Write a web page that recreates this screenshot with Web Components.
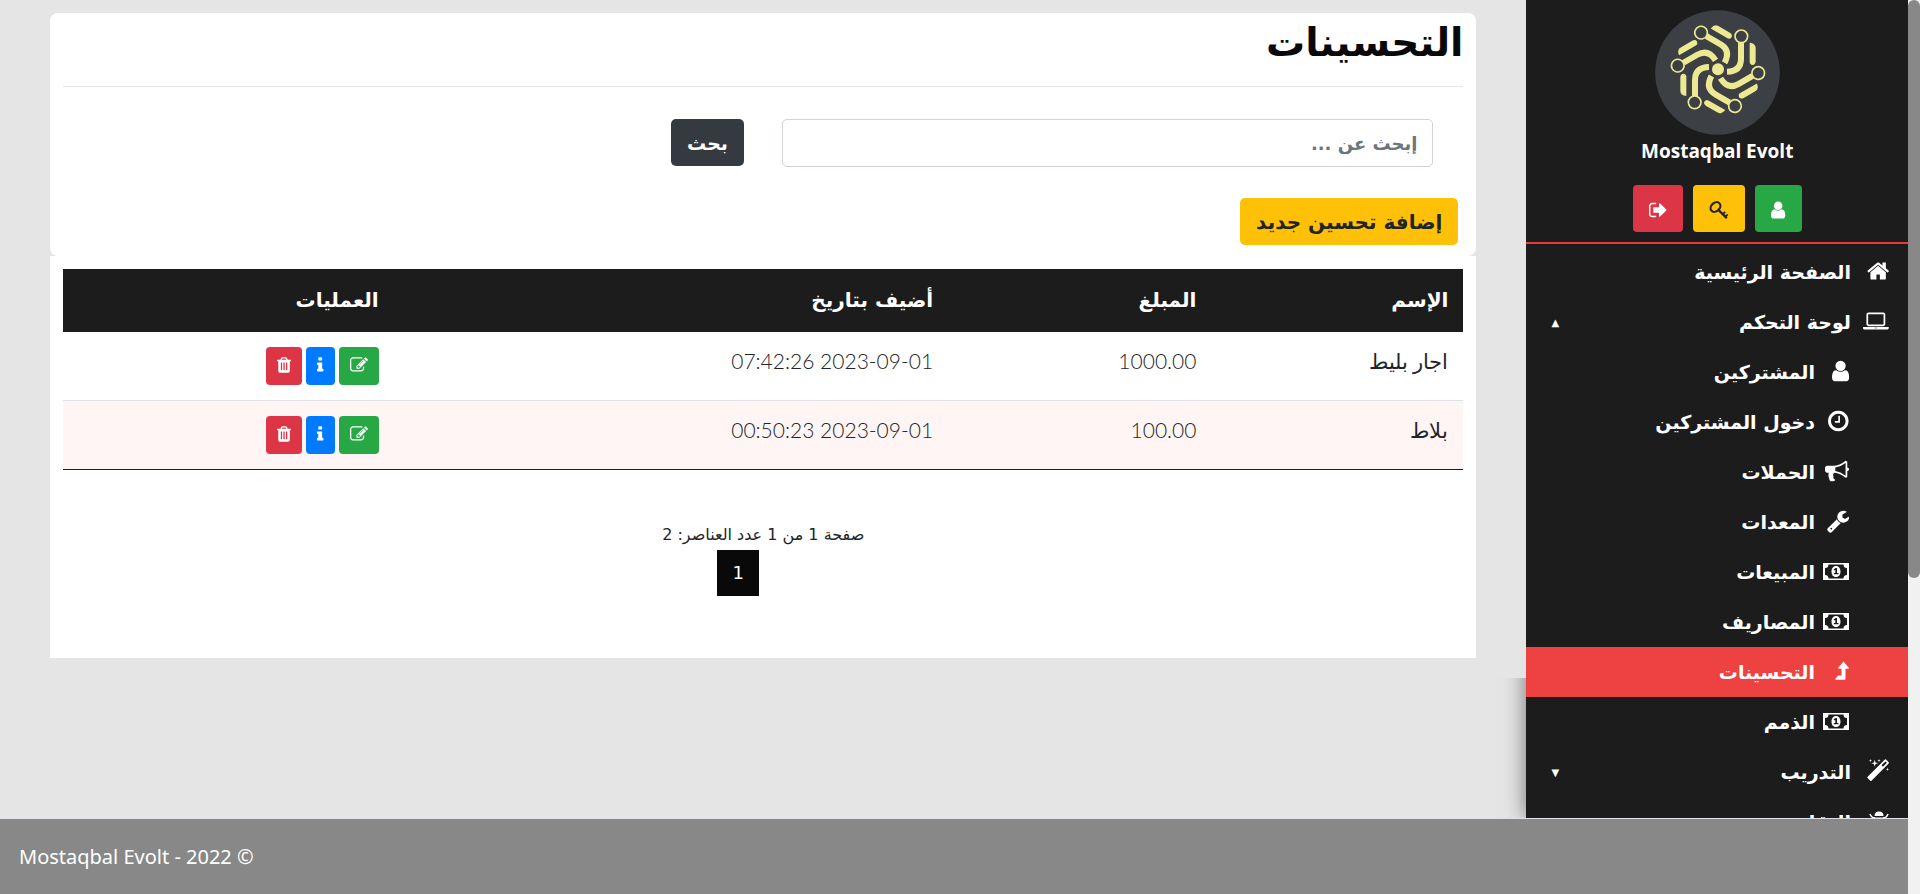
<!DOCTYPE html>
<html lang="ar" dir="rtl">
<head>
<meta charset="utf-8">
<title>التحسينات</title>
<style>
    body {
        margin: 0;
        background: #e5e5e5;
        color: #212529;
        font-family: "DejaVu Sans", sans-serif;
        font-size: 16px;
    }
</style>
</head>
<body>

<app-shell>
    <side-bar slot="side" name="Mostaqbal Evolt">
        <icon-button slot="actions" icon="user" tone="success" label="الملف الشخصي"></icon-button>
        <icon-button slot="actions" icon="key" tone="warning" label="كلمة المرور"></icon-button>
        <icon-button slot="actions" icon="sign-out" tone="danger" label="خروج"></icon-button>

        <nav-item icon="home">الصفحة الرئيسية</nav-item>
        <nav-item icon="laptop" arrow="▲">لوحة التحكم</nav-item>
        <nav-item icon="user" sub>المشتركين</nav-item>
        <nav-item icon="clock" sub>دخول المشتركين</nav-item>
        <nav-item icon="bullhorn" sub>الحملات</nav-item>
        <nav-item icon="wrench" sub>المعدات</nav-item>
        <nav-item icon="money" sub>المبيعات</nav-item>
        <nav-item icon="money" sub>المصاريف</nav-item>
        <nav-item icon="level-up" sub active>التحسينات</nav-item>
        <nav-item icon="money" sub>الذمم</nav-item>
        <nav-item icon="magic" arrow="▼">التدريب</nav-item>
        <nav-item icon="bug">التقارير</nav-item>
    </side-bar>

    <page-card rounded>
        <page-title>التحسينات</page-title>
        <search-form placeholder="إبحث عن ..." action-text="بحث"></search-form>
        <add-button>إضافة تحسين جديد</add-button>
    </page-card>
    <page-card>
        <data-table></data-table>
        <page-pager current="1">صفحة 1 من 1 عدد العناصر: 2</page-pager>
    </page-card>

    <page-footer slot="footer">Mostaqbal Evolt - 2022 ©</page-footer>
</app-shell>

<script>
// Icon table: viewBox + markup
const ICONS = {
    home: ['64 0 1664 1792', '<path d="M1472 992v480q0 26-19 45t-45 19h-384v-384h-256v384h-384q-26 0-45-19t-19-45v-480q0-1 .5-3t.5-3l575-474 575 474q1 2 1 6zm223-69l-62 74q-8 9-21 11h-3q-13 0-21-7l-692-577-692 577q-12 8-24 7-13-2-21-11l-62-74q-8-10-7-23.5t11-21.5l719-599q32-26 76-26t76 26l244 204v-195q0-14 9-23t23-9h192q14 0 23 9t9 23v408l219 182q10 8 11 21.5t-7 23.5z"/>'],
    laptop: ['0 -128 1920 1792', '<path d="M416 1152q-66 0-113-47t-47-113v-704q0-66 47-113t113-47h1088q66 0 113 47t47 113v704q0 66-47 113t-113 47h-1088zm-32-864v704q0 13 9.5 22.5t22.5 9.5h1088q13 0 22.5-9.5t9.5-22.5v-704q0-13-9.5-22.5t-22.5-9.5h-1088q-13 0-22.5 9.5t-9.5 22.5zm1376 928h160v96q0 40-47 68t-113 28h-1600q-66 0-113-28t-47-68v-96h1760zm-720 96q16 0 16-16t-16-16h-160q-16 0-16 16t16 16h160z"/>'],
    user: ['256 0 1280 1792', '<path d="M1536 1399q0 109-62.5 187t-150.5 78h-854q-88 0-150.5-78t-62.5-187q0-85 8.5-160.5t31.5-152 58.5-131 94-89 134.5-34.5q131 128 313 128t313-128q76 0 134.5 34.5t94 89 58.5 131 31.5 152 8.5 160.5zm-256-887q0 159-112.5 271.5t-271.5 112.5-271.5-112.5-112.5-271.5 112.5-271.5 271.5-112.5 271.5 112.5 112.5 271.5z"/>'],
    clock: ['128 0 1536 1792', '<path d="M1024 544v448q0 14-9 23t-23 9h-320q-14 0-23-9t-9-23v-64q0-14 9-23t23-9h224v-352q0-14 9-23t23-9h64q14 0 23 9t9 23zm416 352q0-148-73-273t-198-198-273-73-273 73-198 198-73 273 73 273 198 198 273 73 273-73 198-198 73-273zm224 0q0 209-103 385.5t-279.5 279.5-385.5 103-385.5-103-279.5-279.5-103-385.5 103-385.5 279.5-279.5 385.5-103 385.5 103 279.5 279.5 103 385.5z"/>'],
    bullhorn: ['0 0 1792 1792', '<path d="M1664 640q53 0 90.5 37.5t37.5 90.5-37.5 90.5-90.5 37.5v384q0 52-38 90t-90 38q-417-347-812-380-58 19-91 66t-31 100.5 40 92.5q-20 33-23 65.5t6 58 33.5 55 48 50 61.5 50.5q-29 58-111.5 83t-168.5 11.5-132-55.5q-7-23-29.5-87.5t-32-94.5-23-89-15-101 3.5-98.5 22-110.5h-122q-66 0-113-47t-47-113v-192q0-66 47-113t113-47h480q435 0 896-384 52 0 90 38t38 90v384zm-128 604v-954q-394 302-768 343v270q377 42 768 341z"/>'],
    wrench: ['64 0 1664 1792', '<path d="M448 1472q0-26-19-45t-45-19-45 19-19 45 19 45 45 19 45-19 19-45zm644-420l-682 682q-37 37-90 37-52 0-91-37l-106-108q-38-36-38-90 0-53 38-91l681-681q39 98 114.5 173.5t173.5 114.5zm634-435q0 39-23 106-47 134-164.5 217.5t-258.5 83.5q-185 0-316.5-131.5t-131.5-316.5 131.5-316.5 316.5-131.5q58 0 121.5 16.5t107.5 46.5q16 11 16 28t-16 28l-293 169v224l193 107q5-3 79-48.5t135.5-81 70.5-35.5q15 0 23.5 10t8.5 25z"/>'],
    magic: ['64 0 1664 1792', '<path d="M1254 581l293-293-107-107-293 293zm447-293q0 27-18 45l-1286 1286q-18 18-45 18t-45-18l-198-198q-18-18-18-45t18-45l1286-1286q18-18 45-18t45 18l198 198q18 18 18 45zm-1351-190l98 30-98 30-30 98-30-98-98-30 98-30 30-98zm350 162l196 60-196 60-60 196-60-196-196-60 196-60 60-196zm930 478l98 30-98 30-30 98-30-98-98-30 98-30 30-98zm-640-640l98 30-98 30-30 98-30-98-98-30 98-30 30-98z"/>'],
    'sign-out': ['64 0 1664 1792', '<path d="M704 1440q0 4 1 20t.5 26.5-3 23.5-10 19.5-20.5 6.5h-320q-119 0-203.5-84.5t-84.5-203.5v-704q0-119 84.5-203.5t203.5-84.5h320q13 0 22.5 9.5t9.5 22.5q0 4 1 20t.5 26.5-3 23.5-10 19.5-20.5 6.5h-320q-66 0-113 47t-47 113v704q0 66 47 113t113 47h312l11.5 1 11.5 3 8 5.5 7 9 2 13.5zm928-544q0 26-19 45l-544 544q-19 19-45 19t-45-19-19-45v-288h-448q-26 0-45-19t-19-45v-384q0-26 19-45t45-19h448v-288q0-26 19-45t45-19 45 19l544 544q19 19 19 45z"/>'],
    trash: ['192 0 1408 1792', '<path d="M704 1376v-704q0-14-9-23t-23-9h-64q-14 0-23 9t-9 23v704q0 14 9 23t23 9h64q14 0 23-9t9-23zm256 0v-704q0-14-9-23t-23-9h-64q-14 0-23 9t-9 23v704q0 14 9 23t23 9h64q14 0 23-9t9-23zm256 0v-704q0-14-9-23t-23-9h-64q-14 0-23 9t-9 23v704q0 14 9 23t23 9h64q14 0 23-9t9-23zm-544-992h448l-48-117q-7-9-17-11h-317q-10 2-17 11zm928 32v64q0 14-9 23t-23 9h-96v948q0 83-47 143.5t-113 60.5h-832q-66 0-113-58.5t-47-141.5v-952h-96q-14 0-23-9t-9-23v-64q0-14 9-23t23-9h309l70-167q15-37 54-63t79-26h320q40 0 79 26t54 63l70 167h309q14 0 23 9t9 23z"/>'],
    info: ['576 0 640 1792', '<path d="M1216 1344v128q0 26-19 45t-45 19h-512q-26 0-45-19t-19-45v-128q0-26 19-45t45-19h64v-384h-64q-26 0-45-19t-19-45v-128q0-26 19-45t45-19h384q26 0 45 19t19 45v576h64q26 0 45 19t19 45zm-128-1152v192q0 26-19 45t-45 19h-256q-26 0-45-19t-19-45v-192q0-26 19-45t45-19h256q26 0 45 19t19 45z"/>'],
    edit: ['0 0 1792 1792', '<path d="M888 1184l116-116-152-152-116 116v56h96v96h56zm440-720q-16-16-33 1l-350 350q-17 17-1 33t33-1l350-350q17-17 1-33zm80 594v190q0 119-84.5 203.5t-203.5 84.5h-832q-119 0-203.5-84.5t-84.5-203.5v-832q0-119 84.5-203.5t203.5-84.5h832q63 0 117 25 15 7 18 23 3 17-9 29l-49 49q-14 14-32 8-23-6-45-6h-832q-66 0-113 47t-47 113v832q0 66 47 113t113 47h832q66 0 113-47t47-113v-126q0-13 9-22l64-64q15-15 35-7t20 29zm-96-738l288 288-672 672h-288v-288zm444 132l-92 92-288-288 92-92q28-28 68-28t68 28l152 152q28 28 28 68t-28 68z"/>'],
    money: ['0 0 26 24', '<path fill-rule="evenodd" d="M0 4h26v17H0zM5.500 5.500Q5.500 9 2 9v7q3.500 0 3.500 3.500h15Q20.500 16 24 16V9q-3.500 0-3.500-3.500z"/><path fill-rule="evenodd" d="M13 7c3 0 4.500 2.500 4.500 5.500S16 18 13 18s-4.500-2.500-4.500-5.500S10 7 13 7zm-2.500 3.500.8 1 1-.8V14h-1.500v1.300h4.700V14h-1.500V9h-1.300z"/>'],
    'level-up': ['0 0 14 24', '<path d="M8.500 2.500 13.800 8.800q.4.900-.6 1h-2.700v10q0 1-1 1H.9q-1.100-.2-.5-1.100L3 16.800q.3-.4.900-.4h2.600V9.800H3.700q-1-.1-.5-1z"/>'],
    key: ['0 0 20 20', '<g fill="none" stroke="currentColor"><ellipse cx="6.500" cy="7" rx="5.400" ry="4.200" stroke-width="2.200" transform="rotate(-42 6.500 7)"/><path d="M9.500 10 17.800 18.200" stroke-width="2.400"/><path d="m13.800 14.200 2.400-2.400M16.300 16.700l2.400-2.400" stroke-width="1.700"/></g>'],
    bug: ['0 0 20 24', '<path d="M5.500 7q0-4.500 4.500-4.500T14.500 7zM4.500 8.500h11V15q0 5.500-5.500 6.500Q4.500 20.500 4.500 15z"/><path fill="none" stroke="currentColor" stroke-width="1.500" d="M1 5q1.500 4 5 4M19 5q-1.500 4-5 4M0 13.500h5M15 13.500h5M5 17l-3 4M15 17l3 4"/>']
};

class AppIcon extends HTMLElement {
    constructor() {
        super();
        this.attachShadow({ mode: 'open' });
        const [box, body] = ICONS[this.getAttribute('name')];
        this.shadowRoot.innerHTML = `
            <style>
                :host { display: inline-flex; }
                svg { height: var(--icon-size, 24px); width: auto; display: block; fill: currentColor; }
            </style>
            <svg viewBox="${box}" aria-hidden="true">${body}</svg>
        `;
    }
}

class IconButton extends HTMLElement {
    constructor() {
        super();
        this.attachShadow({ mode: 'open' });
        this.shadowRoot.innerHTML = `
            <style>
                :host { display: inline-block; --icon-size: 20px; }
                :host([small]) { --icon-size: 18px; }
                button {
                    display: flex;
                    align-items: center;
                    height: 47px;
                    padding: 2px 16px 0;
                    border: 0;
                    border-radius: 4px;
                    color: #fff;
                    background: #28a745;
                    cursor: pointer;
                }
                :host([small]) button { height: 38px; padding: 0 11px 2px; }
                :host([tone="warning"]) button { background: #ffc107; color: #212529; }
                :host([tone="danger"]) button { background: #dc3545; }
                :host([tone="primary"]) button { background: #007bff; }
            </style>
            <button type="button" aria-label="${this.getAttribute('label')}">
                <app-icon name="${this.getAttribute('icon')}"></app-icon>
            </button>
        `;
    }
}

class BrandLogo extends HTMLElement {
    constructor() {
        super();
        this.attachShadow({ mode: 'open' });
        // One arm, repeated six times around the centre
        let arms = '';
        for (let i = 0; i < 6; i++) {
            arms += `<use href="#arm" transform="rotate(${i * 60})"/>`;
        }
        this.shadowRoot.innerHTML = `
            <style>
                :host { display: block; width: 125px; height: 125px; }
                svg { width: 100%; height: 100%; display: block; }
            </style>
            <svg viewBox="-189 -178 375 375" aria-hidden="true">
                <defs>
                    <g id="arm">
                        <circle cx="70" cy="-99" r="19" fill="none" stroke="#ece992" stroke-width="5"/>
                        <path d="M69 -80V-32Q69 6 27 7" fill="none" stroke="#ece992" stroke-width="18"/>
                        <path d="M95 -80q18 2 18 16v40q-1 11-9 11-9-1-9-9z" fill="#ece992"/>
                    </g>
                </defs>
                <circle cx="-1.500" cy="9.500" r="187" fill="#3c3f44"/>
                ${arms}
                <circle r="18" fill="#ece992"/>
            </svg>
        `;
    }
}

class NavItem extends HTMLElement {
    constructor() {
        super();
        this.attachShadow({ mode: 'open' });
        const arrow = this.getAttribute('arrow');
        this.shadowRoot.innerHTML = `
            <style>
                :host { display: block; }
                a {
                    display: flex;
                    align-items: center;
                    height: 50px;
                    padding: 0 19px 0 25px;
                    color: #fff;
                    text-decoration: none;
                    font-size: 19px;
                    font-weight: bold;
                }
                .icon { width: 38px; display: flex; padding-bottom: 2px; }
                .text { flex: 1; }
                .arrow { font-size: 10px; font-weight: normal; }
                :host([sub]) a { padding-right: 59px; }
                :host([sub]) .icon { width: 34px; }
                :host([active]) a { background: #ee4141; }
            </style>
            <a href="#">
                <span class="icon"><app-icon name="${this.getAttribute('icon')}"></app-icon></span>
                <span class="text"><slot></slot></span>
                ${arrow ? `<span class="arrow">${arrow}</span>` : ''}
            </a>
        `;
    }
}

class SideBar extends HTMLElement {
    constructor() {
        super();
        this.attachShadow({ mode: 'open' });
        this.shadowRoot.innerHTML = `
            <style>
                :host {
                    display: block;
                    height: 100%;
                    overflow: hidden;
                    background: #1c1c1c;
                    color: #fff;
                }
                header {
                    display: flex;
                    flex-direction: column;
                    align-items: center;
                    padding: 10px 0;
                    border-bottom: 2px solid #e53b3b;
                }
                .name {
                    font: bold 19px/32px "Open Sans", sans-serif;
                    padding-bottom: 18px;
                }
                .actions { display: flex; gap: 10px; }
                nav { padding-top: 3px; }
            </style>
            <header>
                <brand-logo></brand-logo>
                <div class="name" dir="ltr">${this.getAttribute('name')}</div>
                <div class="actions"><slot name="actions"></slot></div>
            </header>
            <nav><slot></slot></nav>
        `;
    }
}

class PageCard extends HTMLElement {
    constructor() {
        super();
        this.attachShadow({ mode: 'open' });
        this.shadowRoot.innerHTML = `
            <style>
                :host { display: block; background: #fff; padding: 13px 13px 62px; }
                :host([rounded]) { border-radius: 8px; padding: 0 13px 11px; }
            </style>
            <slot></slot>
        `;
    }
}

class PageTitle extends HTMLElement {
    constructor() {
        super();
        this.attachShadow({ mode: 'open' });
        this.shadowRoot.innerHTML = `
            <style>
                :host { display: block; border-bottom: 1px solid #e5e5e5; padding-bottom: 13px; }
                h1 { margin: 0; font-size: 39px; line-height: 60px; color: #090909; }
            </style>
            <h1><slot></slot></h1>
        `;
    }
}

class SearchForm extends HTMLElement {
    constructor() {
        super();
        this.attachShadow({ mode: 'open' });
        const placeholder = this.getAttribute('placeholder');
        this.shadowRoot.innerHTML = `
            <style>
                :host { display: block; }
                form { display: flex; align-items: flex-start; gap: 38px; padding: 32px 30px 31px; }
                .field { flex: 0 0 48.6%; display: flex; }
                input {
                    flex: 1;
                    min-width: 0;
                    height: 48px;
                    box-sizing: border-box;
                    padding: 0 15px;
                    border: 1px solid #ced4da;
                    border-radius: 5px;
                    font: bold 18px "DejaVu Sans", sans-serif;
                }
                input::placeholder { color: #6c757d; opacity: 1; }
                button {
                    height: 47px;
                    padding: 0 16px;
                    border: 0;
                    border-radius: 5px;
                    background: #343a40;
                    color: #fff;
                    font: bold 19px "DejaVu Sans", sans-serif;
                }
            </style>
            <form>
                <label class="field"><input type="text" aria-label="${placeholder}" placeholder="${placeholder}"></label>
                <button type="button">${this.getAttribute('action-text')}</button>
            </form>
        `;
    }
}

class AddButton extends HTMLElement {
    constructor() {
        super();
        this.attachShadow({ mode: 'open' });
        this.shadowRoot.innerHTML = `
            <style>
                :host { display: flex; padding-right: 5px; }
                button {
                    height: 47px;
                    padding: 0 16px;
                    border: 0;
                    border-radius: 5px;
                    background: #ffc107;
                    color: #212529;
                    font: bold 20px "DejaVu Sans", sans-serif;
                }
            </style>
            <button type="button"><slot></slot></button>
        `;
    }
}

class DataTable extends HTMLElement {
    constructor() {
        super();
        this.attachShadow({ mode: 'open' });
        this.rows = [
            ['اجار بليط', '1000.00', '2023-09-01 07:42:26'],
            ['بلاط', '100.00', '2023-09-01 00:50:23']
        ];
        this.render();
    }

    render() {
        this.shadowRoot.innerHTML = `
            <style>
                :host { display: block; }
                table { width: 100%; table-layout: fixed; border-collapse: separate; border-spacing: 0; border-bottom: 1px solid #1c1c1c; }
                th {
                    height: 63px;
                    box-sizing: border-box;
                    padding: 0 15px 2px;
                    background: #1c1c1c;
                    color: #fff;
                    font-size: 20px;
                    text-align: right;
                }
                td {
                    height: 68px;
                    box-sizing: border-box;
                    padding: 15px 15px 14px;
                    vertical-align: top;
                    font-family: Lato, "DejaVu Sans", sans-serif;
                    font-size: 21px;
                    font-weight: 300;
                    line-height: 28px;
                }
                tr + tr td { height: 69px; background: #fff5f4; border-top: 1px solid #dee2e6; }
                .ops { display: flex; gap: 4px; }
                .name { width: 18%; }
                .amount { width: 18.8%; }
                .date { width: 39.6%; }
            </style>
            <table>
                <thead>
                    <tr>
                        <th class="name">الإسم</th>
                        <th class="amount">المبلغ</th>
                        <th class="date">أضيف بتاريخ</th>
                        <th>العمليات</th>
                    </tr>
                </thead>
                <tbody>
                    ${this.rows.map((row) => `
                        <tr>
                            ${row.map((cell) => `<td>${cell}</td>`).join('')}
                            <td>
                                <div class="ops">
                                    <icon-button small icon="edit" tone="success" label="تعديل"></icon-button>
                                    <icon-button small icon="info" tone="primary" label="تفاصيل"></icon-button>
                                    <icon-button small icon="trash" tone="danger" label="حذف"></icon-button>
                                </div>
                            </td>
                        </tr>
                    `).join('')}
                </tbody>
            </table>
        `;
    }
}

class PagePager extends HTMLElement {
    constructor() {
        super();
        this.attachShadow({ mode: 'open' });
        this.shadowRoot.innerHTML = `
            <style>
                :host { display: flex; flex-direction: column; align-items: center; padding-top: 50px; }
                p { margin: 0; font-size: 16px; line-height: 30px; }
                nav { display: flex; padding-right: 50px; }
                a {
                    padding: 0 15px;
                    background: #090909;
                    color: #fff;
                    font-size: 18px;
                    line-height: 46px;
                    text-decoration: none;
                }
            </style>
            <p><slot></slot></p>
            <nav><a href="#">${this.getAttribute('current')}</a></nav>
        `;
    }
}

class PageFooter extends HTMLElement {
    constructor() {
        super();
        this.attachShadow({ mode: 'open' });
        this.shadowRoot.innerHTML = `
            <style>
                :host {
                    display: block;
                    direction: ltr;
                    padding: 0 19px;
                    border-top: 1px solid #dee2e6;
                    background: #888;
                    color: #fff;
                    font: 20px/75px "Noto Sans", sans-serif;
                }
            </style>
            <slot></slot>
        `;
    }
}

class AppShell extends HTMLElement {
    constructor() {
        super();
        this.attachShadow({ mode: 'open' });
        this.shadowRoot.innerHTML = `
            <style>
                :host { display: flex; height: 100vh; overflow: hidden; }
                .track { width: 12px; background: #f1f1f1; }
                .thumb { height: 64.6%; border-radius: 6px; background: #888; }
                .page { flex: 1; min-width: 0; display: flex; flex-direction: column; }
                .middle { flex: 1; min-height: 0; display: flex; align-items: flex-start; overflow: hidden; }
                aside { width: 20%; height: 100%; box-shadow: 0 0 20px rgba(0, 0, 0, .5); }
                /* main is painted over the side shadow */
                main {
                    position: relative;
                    flex: 1;
                    min-width: 0;
                    padding: 13px 50px 20px;
                    background: #e5e5e5;
                }
            </style>
            <div class="track"><div class="thumb"></div></div>
            <div class="page">
                <div class="middle">
                    <aside><slot name="side"></slot></aside>
                    <main><slot></slot></main>
                </div>
                <slot name="footer"></slot>
            </div>
        `;
    }
}

customElements.define('app-icon', AppIcon);
customElements.define('icon-button', IconButton);
customElements.define('brand-logo', BrandLogo);
customElements.define('nav-item', NavItem);
customElements.define('side-bar', SideBar);
customElements.define('page-card', PageCard);
customElements.define('page-title', PageTitle);
customElements.define('search-form', SearchForm);
customElements.define('add-button', AddButton);
customElements.define('data-table', DataTable);
customElements.define('page-pager', PagePager);
customElements.define('page-footer', PageFooter);
customElements.define('app-shell', AppShell);
</script>
</body>
</html>
